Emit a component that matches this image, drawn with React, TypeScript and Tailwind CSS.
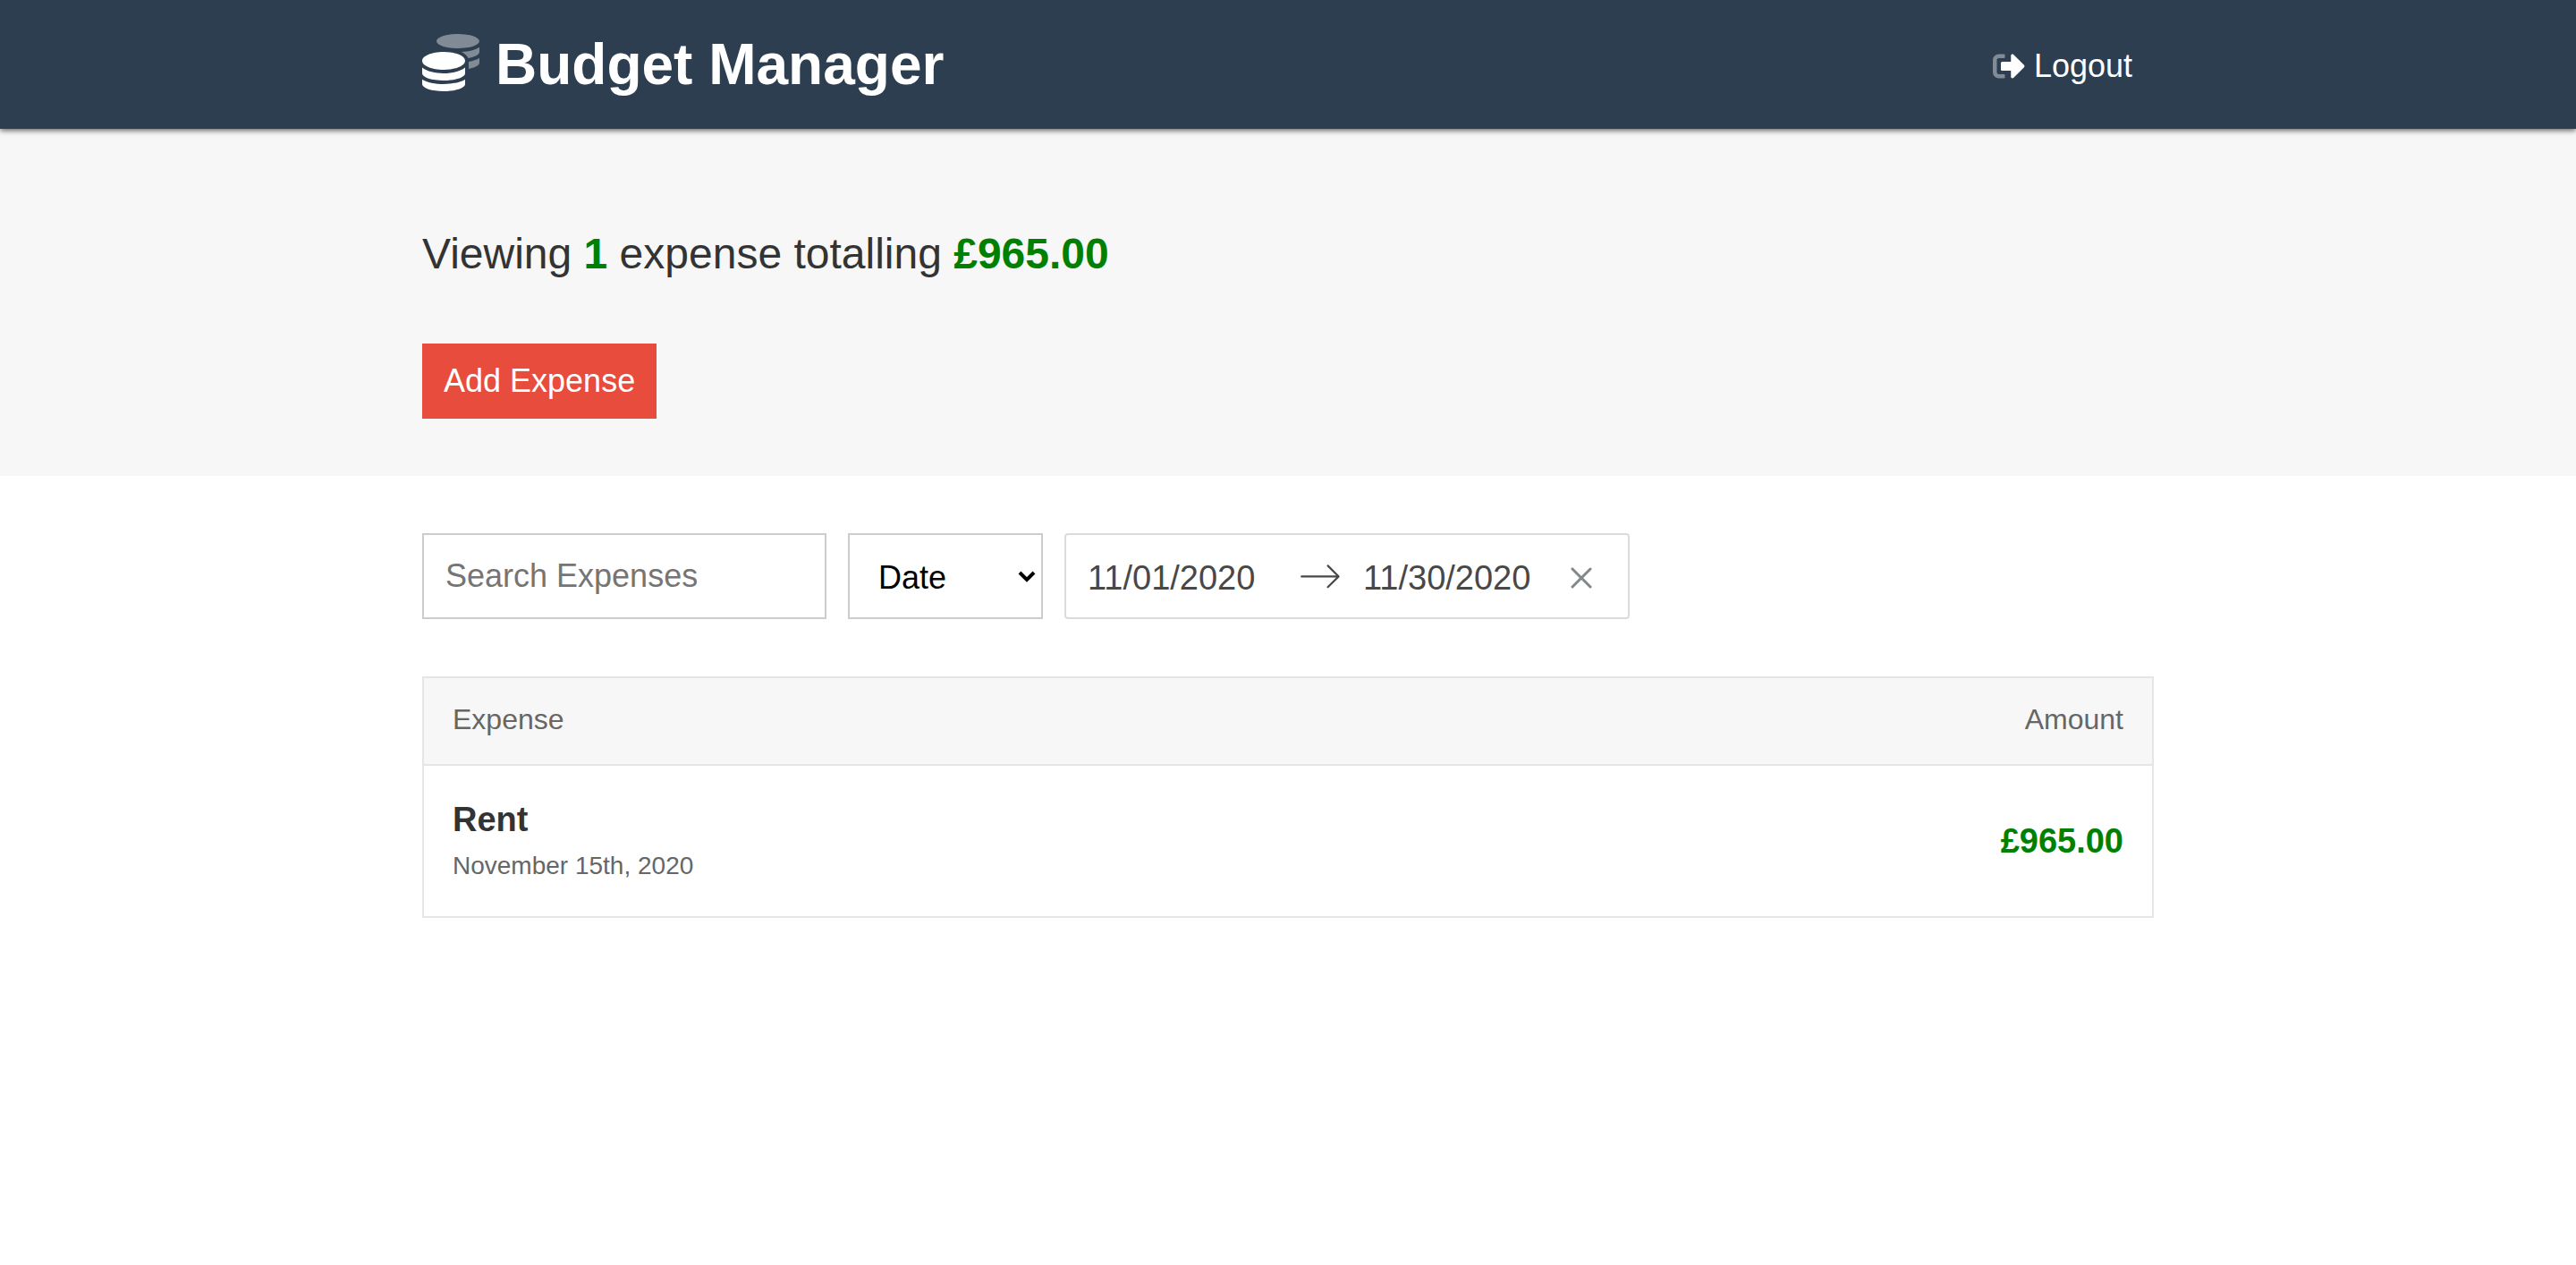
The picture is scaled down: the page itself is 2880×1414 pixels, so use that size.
import { useState } from "react";

const expenses = [
  { id: 1, name: "Rent", date: "November 15th, 2020", amount: "£965.00" },
];

function CoinsIcon() {
  return (
    <svg viewBox="0 0 512 512" className="size-16 shrink-0 fill-current" aria-hidden="true">
      <path
        opacity="0.4"
        d="M320 128c106 0 192-28.7 192-64S426 0 320 0 128 28.7 128 64s86 64 192 64zM416 311.4c57.3-11.1 96-31.7 96-55.4v-42.7c-23.2 16.4-57.3 27.6-96 34.5v63.6zM411.3 216.3c60-10.8 100.7-32 100.7-56.3v-42.7c-35.5 25.1-96.5 38.6-160.7 41.8 29.5 14.3 51.2 33.5 60 57.2z"
      />
      <path d="M0 405.3V448c0 35.3 86 64 192 64s192-28.7 192-64v-42.7C342.7 434.4 267.2 448 192 448S41.3 434.4 0 405.3zM0 300.4V352c0 35.3 86 64 192 64s192-28.7 192-64v-51.6c-41.3 34-116.9 51.6-192 51.6S41.3 334.4 0 300.4zM192 160C86 160 0 195.8 0 240s86 80 192 80 192-35.8 192-80-86-80-192-80z" />
    </svg>
  );
}

function SignOutIcon() {
  return (
    <svg viewBox="0 0 512 512" className="size-9 shrink-0 fill-current" aria-hidden="true">
      <path
        opacity="0.4"
        d="M180 448H96c-53 0-96-43-96-96V160c0-53 43-96 96-96h84c6.6 0 12 5.4 12 12v40c0 6.6-5.4 12-12 12H96c-17.7 0-32 14.3-32 32v192c0 17.7 14.3 32 32 32h84c6.6 0 12 5.4 12 12v40c0 6.6-5.4 12-12 12z"
      />
      <path d="M497 273L329 441c-15 15-41 4.5-41-17v-96H152c-13.3 0-24-10.7-24-24v-96c0-13.3 10.7-24 24-24h136V88c0-21.4 25.9-32 41-17l168 168c9.3 9.4 9.3 24.6 0 34z" />
    </svg>
  );
}

function Header() {
  return (
    <header className="relative bg-[#2c3e50] text-white shadow-[0_2px_6px_rgba(0,0,0,0.6)]">
      <div className="mx-auto flex h-36 max-w-[2000px] items-center justify-between px-8">
        <a href="#dashboard" className="flex items-start gap-[18px]">
          <CoinsIcon />
          <h1 className="text-[64px] leading-[68px] font-bold">Budget Manager</h1>
        </a>
        <button type="button" className="flex items-center gap-2.5 px-6 pt-1 text-[36px] leading-[40px]">
          <SignOutIcon />
          Logout
        </button>
      </div>
    </header>
  );
}

function Summary() {
  return (
    <section className="bg-[#f7f7f7]">
      <div className="mx-auto max-w-[2000px] px-8 pt-27 pb-16">
        <h2 className="mb-17 text-[48px] leading-[64px] font-light">
          Viewing <strong className="font-bold text-[#008000]">1</strong> expense totalling{" "}
          <strong className="font-bold text-[#008000]">£965.00</strong>
        </h2>
        <button type="button" className="h-21 bg-[#e74c3c] px-6 text-[36px] leading-[40px] text-white">
          Add Expense
        </button>
      </div>
    </section>
  );
}

function Filters() {
  const [search, setSearch] = useState("");
  const [start, setStart] = useState("11/01/2020");
  const [end, setEnd] = useState("11/30/2020");
  const clear = () => {
    setStart("");
    setEnd("");
  };

  return (
    <form className="mb-16 flex flex-wrap gap-6">
      <input
        type="text"
        aria-label="Search Expenses"
        placeholder="Search Expenses"
        value={search}
        onChange={(e) => setSearch(e.target.value)}
        className="h-24 w-[452px] border-2 border-[#cacccd] px-6 text-[36px] font-light placeholder:text-[#757575]"
      />
      <div className="relative">
        <select
          aria-label="Sort by"
          className="h-24 w-[218px] appearance-none border-2 border-[#cacccd] bg-white px-8 pt-1 text-[36px] font-light text-black"
        >
          <option>Date</option>
          <option>Amount</option>
        </select>
        <svg
          viewBox="0 0 20 14"
          className="pointer-events-none absolute top-[42px] right-2 h-3.5 w-5 fill-none stroke-black"
          strokeWidth="4"
          aria-hidden="true"
        >
          <path d="M2 2l8 8 8-8" />
        </svg>
      </div>
      <div className="flex h-24 items-center rounded-[4px] border-2 border-[#dbdbdb] bg-white text-[38px] font-light text-[#484848]">
        <input
          type="text"
          aria-label="Start Date"
          value={start}
          onChange={(e) => setStart(e.target.value)}
          className="w-65 px-6 pt-1"
        />
        <svg viewBox="0 0 1000 1000" className="size-12 fill-[#484848]" aria-hidden="true">
          <path d="M694 242l249 250c12 11 12 21 1 32L694 773c-5 5-10 7-16 7s-11-2-16-7c-11-11-11-21 0-32l210-210H68c-13 0-23-10-23-23s10-23 23-23h806L662 275c-21-22 11-54 32-33z" />
        </svg>
        <input
          type="text"
          aria-label="End Date"
          value={end}
          onChange={(e) => setEnd(e.target.value)}
          className="w-58 pt-1 pl-6"
        />
        <button type="button" aria-label="Clear Dates" onClick={clear} className="pt-1 pr-10 pl-6">
          <svg viewBox="0 0 12 12" className="size-6 fill-[#82888a]" aria-hidden="true">
            <path d="M11.53.47a.75.75 0 0 0-1.061 0l-4.47 4.47-4.47-4.47a.75.75 0 1 0-1.06 1.06l4.47 4.47-4.47 4.47a.75.75 0 1 0 1.061 1.061l4.47-4.47 4.47 4.47a.75.75 0 1 0 1.06-1.061l-4.47-4.47 4.47-4.47a.75.75 0 0 0 0-1.061z" />
          </svg>
        </button>
      </div>
    </form>
  );
}

function ExpenseTable() {
  return (
    <div className="border-2 border-[#e5e5e5]">
      <table className="w-full border-collapse">
        <thead>
          <tr className="border-b-2 border-[#e5e5e5] bg-[#f7f7f7] text-[32px] leading-[40px] text-[#666666]">
            <th scope="col" className="px-8 pt-[26px] pb-[30px] text-left font-normal">Expense</th>
            <th scope="col" className="px-8 pt-[26px] pb-[30px] text-right font-normal">Amount</th>
          </tr>
        </thead>
        <tbody>
          {expenses.map((expense) => (
            <tr key={expense.id}>
              <td className="px-8 py-8">
                <a href="#edit" className="block">
                  <h3 className="text-[38px] leading-[56px] font-bold">{expense.name}</h3>
                  <span className="block text-[28px] leading-[48px] text-[#666666]">{expense.date}</span>
                </a>
              </td>
              <td className="px-8 py-8 text-right text-[38px] leading-[56px] font-bold text-[#008000]">
                {expense.amount}
              </td>
            </tr>
          ))}
        </tbody>
      </table>
    </div>
  );
}

export default function App() {
  return (
    <div className="min-h-screen bg-white font-['Liberation_Sans',Arial,sans-serif] text-[#333333]">
      <Header />
      <main>
        <Summary />
        <div className="mx-auto max-w-[2000px] px-8 py-16">
          <Filters />
          <ExpenseTable />
        </div>
      </main>
    </div>
  );
}
